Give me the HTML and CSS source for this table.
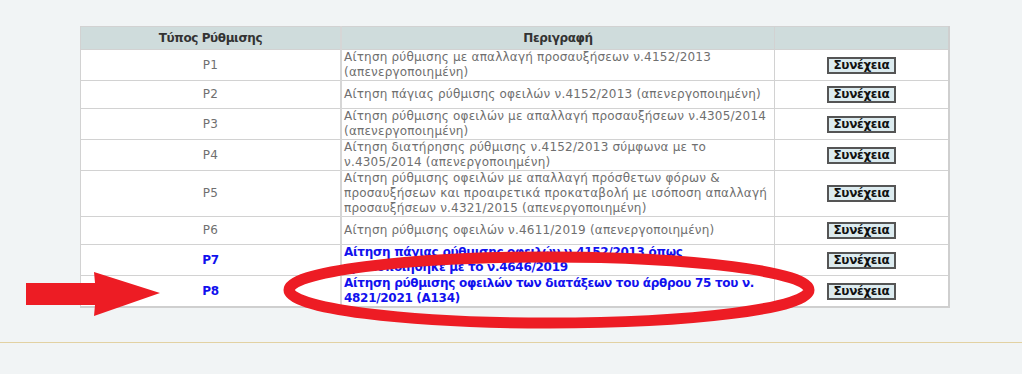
FILE: index.html
```html
<!DOCTYPE html>
<html lang="el">
<head>
<meta charset="utf-8">
<title>Ρυθμίσεις</title>
<link rel="stylesheet" href="styles.css">
</head>
<body>
<div class="page">
  <div class="content">
    <table class="grid">
      <thead>
        <tr>
          <th class="c-type">Τύπος Ρύθμισης</th>
          <th class="c-desc">Περιγραφή</th>
          <th class="c-act"></th>
        </tr>
      </thead>
      <tbody>
        <tr>
          <td class="c-type">P1</td>
          <td class="c-desc">Αίτηση ρύθμισης με απαλλαγή προσαυξήσεων ν.4152/2013 (απενεργοποιημένη)</td>
          <td class="c-act"><button class="btn">Συνέχεια</button></td>
        </tr>
        <tr>
          <td class="c-type">P2</td>
          <td class="c-desc">Αίτηση πάγιας ρύθμισης οφειλών ν.4152/2013 (απενεργοποιημένη)</td>
          <td class="c-act"><button class="btn">Συνέχεια</button></td>
        </tr>
        <tr>
          <td class="c-type">P3</td>
          <td class="c-desc">Αίτηση ρύθμισης οφειλών με απαλλαγή προσαυξήσεων ν.4305/2014 (απενεργοποιημένη)</td>
          <td class="c-act"><button class="btn">Συνέχεια</button></td>
        </tr>
        <tr>
          <td class="c-type">P4</td>
          <td class="c-desc">Αίτηση διατήρησης ρύθμισης ν.4152/2013 σύμφωνα με το ν.4305/2014 (απενεργοποιημένη)</td>
          <td class="c-act"><button class="btn">Συνέχεια</button></td>
        </tr>
        <tr>
          <td class="c-type">P5</td>
          <td class="c-desc">Αίτηση ρύθμισης οφειλών με απαλλαγή πρόσθετων φόρων &amp; προσαυξήσεων και προαιρετικά προκαταβολή με ισόποση απαλλαγή προσαυξήσεων ν.4321/2015 (απενεργοποιημένη)</td>
          <td class="c-act"><button class="btn">Συνέχεια</button></td>
        </tr>
        <tr>
          <td class="c-type">P6</td>
          <td class="c-desc">Αίτηση ρύθμισης οφειλών ν.4611/2019 (απενεργοποιημένη)</td>
          <td class="c-act"><button class="btn">Συνέχεια</button></td>
        </tr>
        <tr class="active">
          <td class="c-type">P7</td>
          <td class="c-desc">Αίτηση πάγιας ρύθμισης οφειλών ν.4152/2013 όπως τροποποιήθηκε με το ν.4646/2019</td>
          <td class="c-act"><button class="btn">Συνέχεια</button></td>
        </tr>
        <tr class="active">
          <td class="c-type">P8</td>
          <td class="c-desc">Αίτηση ρύθμισης οφειλών των διατάξεων του άρθρου 75 του ν. 4821/2021 (Α134)</td>
          <td class="c-act"><button class="btn">Συνέχεια</button></td>
        </tr>
      </tbody>
    </table>
  </div>
  <div class="rule"></div>
  <svg class="annot" width="1022" height="374" viewBox="0 0 1022 374" aria-hidden="true">
    <polygon points="26,283 95,283 94,272 160,293 94,316 95,305 26,305" fill="#ed1c24"/>
    <ellipse cx="549" cy="290" rx="260" ry="33" fill="none" stroke="#ed1c24" stroke-width="11"/>
  </svg>
</div>
</body>
</html>
```

FILE: styles.css
```css
html, body {
  margin: 0;
  padding: 0;
  background: #f1f4f5;
}

.page {
  position: relative;
  width: 1022px;
  height: 374px;
  overflow: hidden;
  font-family: "DejaVu Sans", Verdana, sans-serif;
}

.content {
  padding: 26px 0 0 80px;
  height: 316px;
  box-sizing: border-box;
}

.grid {
  width: 870px;
  border-collapse: collapse;
  background: #ffffff;
  border-left: 1px solid #d2d2d2;
  border-top: 1px solid #d2d2d2;
  border-right: 2px solid #cfcfcf;
  border-bottom: 2px solid #cfcfcf;
  font-size: 12px;
  line-height: 15px;
}

.grid th {
  background: #cfdcdc;
  color: #333333;
  font-weight: bold;
  letter-spacing: -0.4px;
  height: 22px;
  padding: 0;
  text-align: center;
  border-bottom: 1px solid #d2d2d2;
}

.grid td {
  color: #6f6f6f;
  letter-spacing: 0.2px;
  padding: 0 2px;
  vertical-align: middle;
  border-bottom: 1px solid #d2d2d2;
  height: 28px;
  box-sizing: border-box;
}

.grid .c-type {
  width: 259px;
  text-align: center;
  border-right: 2px solid #d6d6d6;
}

.grid .c-desc {
  width: 432px;
  text-align: left;
  border-right: 1px solid #d2d2d2;
}

.grid th.c-desc {
  text-align: center;
}

.grid .c-act {
  text-align: center;
}

.grid tr.active td {
  color: #1111ee;
  font-weight: bold;
  letter-spacing: -0.3px;
}

.btn {
  font-family: "DejaVu Sans", Verdana, sans-serif;
  font-size: 12px;
  font-weight: bold;
  letter-spacing: -0.3px;
  color: #111111;
  background: #dcebef;
  border: 2px solid #555555;
  border-radius: 0;
  padding: 0 4px;
  height: 17px;
  line-height: 13px;
  margin: 0;
}

.rule {
  height: 1px;
  background: #e2d1a2;
  margin-top: 26px;
}

.annot {
  position: absolute;
  left: 0;
  top: 0;
  pointer-events: none;
}
```
